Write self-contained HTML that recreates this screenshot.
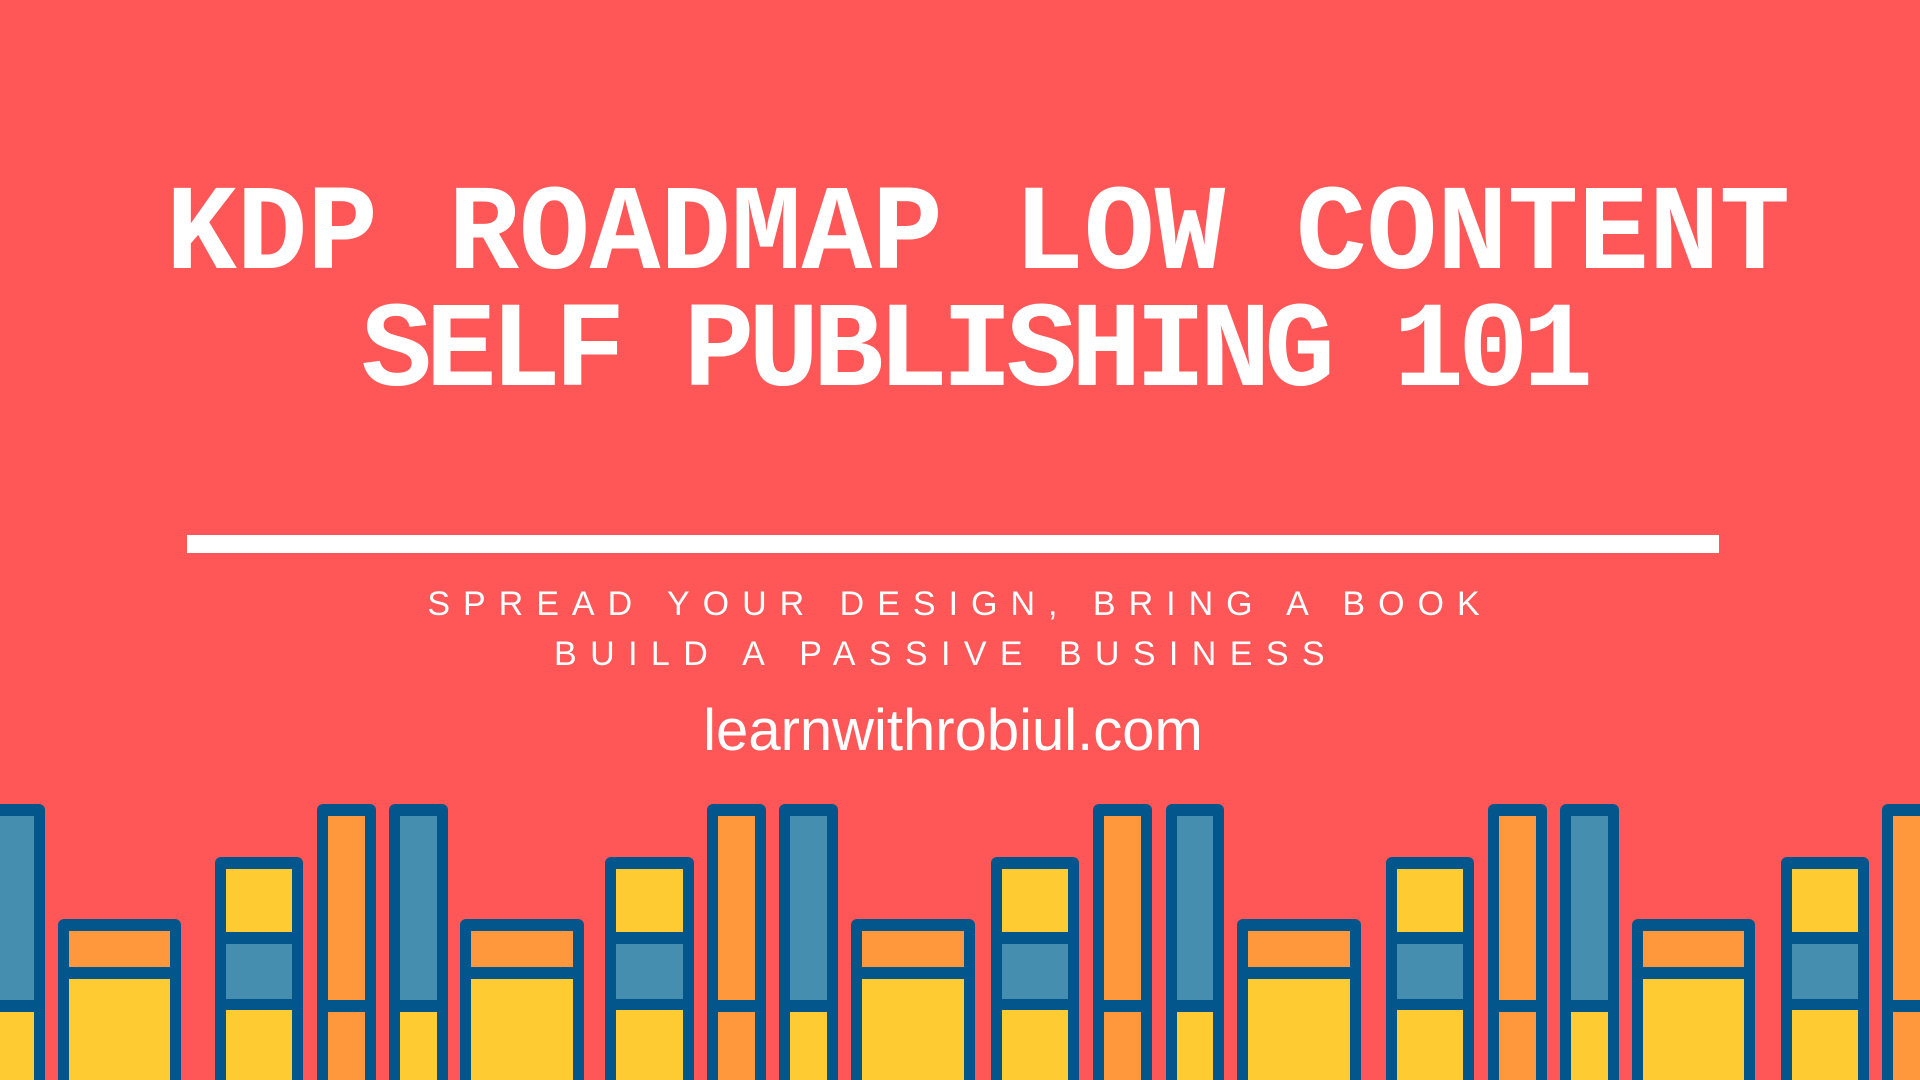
<!DOCTYPE html>
<html><head><meta charset="utf-8"><style>
html,body{margin:0;padding:0;overflow:hidden;width:1920px;height:1080px}
body{background:#ff5757;position:relative;font-family:"Liberation Sans",sans-serif}
.t{position:absolute;left:0;width:1956px;text-align:center;color:#fff;font-family:"Liberation Mono",monospace;font-weight:bold;font-size:118px;letter-spacing:-0.2px;line-height:1;white-space:nowrap;transform-origin:50% 50%;transform:scaleY(1.03)}
.bar{position:absolute;left:187px;top:535px;width:1532px;height:18px;background:#fff}
.s{position:absolute;left:0;width:1920px;text-align:center;color:#fff;font-size:34px;letter-spacing:13px;white-space:nowrap;line-height:1}
.u{position:absolute;left:0;width:1906px;text-align:center;color:#fff;font-size:58px;white-space:nowrap;line-height:1}
.b{position:absolute;background:#02568c;border-radius:6px 6px 0 0;bottom:0;overflow:hidden}
.b i{position:absolute;left:11px;right:11px;display:block}
.tall{top:804px}.med{top:857px}.sh{top:919px}
.Y{background:#ffcb32}.O{background:#ff973d}.B{background:#468eb0}
</style></head><body>
<div class="t" style="top:178px">KDP ROADMAP LOW CONTENT</div>
<div class="t" style="top:295px;width:1948px;letter-spacing:-6.3px">SELF PUBLISHING 101</div>
<div class="bar"></div>
<div class="s" style="top:587px;left:0">SPREAD YOUR DESIGN, BRING A BOOK</div>
<div class="s" style="top:637px;left:-14px;letter-spacing:13.4px">BUILD A PASSIVE BUSINESS</div>
<div class="u" style="top:702px">learnwithrobiul.com</div>

<div class="b tall" style="left:-15px;width:60px"><i class="B" style="top:12px;height:184px"></i><i class="Y" style="top:208px;bottom:0"></i></div>
<div class="b sh" style="left:58px;width:123px"><i class="O" style="top:12px;height:36px"></i><i class="Y" style="top:60px;bottom:0"></i></div>
<div class="b med" style="left:215px;width:88px"><i class="Y" style="top:12px;height:63px"></i><i class="B" style="top:87px;height:55px"></i><i class="Y" style="top:153px;bottom:0"></i></div>
<div class="b tall" style="left:317px;width:59px"><i class="O" style="top:12px;height:184px"></i><i class="O" style="top:208px;bottom:0"></i></div>
<div class="b tall" style="left:389px;width:59px"><i class="B" style="top:12px;height:184px"></i><i class="Y" style="top:208px;bottom:0"></i></div>

<div class="b sh" style="left:460px;width:124px"><i class="O" style="top:12px;height:36px"></i><i class="Y" style="top:60px;bottom:0"></i></div>
<div class="b med" style="left:605px;width:89px"><i class="Y" style="top:12px;height:63px"></i><i class="B" style="top:87px;height:55px"></i><i class="Y" style="top:153px;bottom:0"></i></div>
<div class="b tall" style="left:707px;width:59px"><i class="O" style="top:12px;height:184px"></i><i class="O" style="top:208px;bottom:0"></i></div>
<div class="b tall" style="left:779px;width:59px"><i class="B" style="top:12px;height:184px"></i><i class="Y" style="top:208px;bottom:0"></i></div>

<div class="b sh" style="left:851px;width:124px"><i class="O" style="top:12px;height:36px"></i><i class="Y" style="top:60px;bottom:0"></i></div>
<div class="b med" style="left:991px;width:88px"><i class="Y" style="top:12px;height:63px"></i><i class="B" style="top:87px;height:55px"></i><i class="Y" style="top:153px;bottom:0"></i></div>
<div class="b tall" style="left:1093px;width:59px"><i class="O" style="top:12px;height:184px"></i><i class="O" style="top:208px;bottom:0"></i></div>
<div class="b tall" style="left:1166px;width:58px"><i class="B" style="top:12px;height:184px"></i><i class="Y" style="top:208px;bottom:0"></i></div>

<div class="b sh" style="left:1237px;width:124px"><i class="O" style="top:12px;height:36px"></i><i class="Y" style="top:60px;bottom:0"></i></div>
<div class="b med" style="left:1386px;width:88px"><i class="Y" style="top:12px;height:63px"></i><i class="B" style="top:87px;height:55px"></i><i class="Y" style="top:153px;bottom:0"></i></div>
<div class="b tall" style="left:1488px;width:59px"><i class="O" style="top:12px;height:184px"></i><i class="O" style="top:208px;bottom:0"></i></div>
<div class="b tall" style="left:1560px;width:59px"><i class="B" style="top:12px;height:184px"></i><i class="Y" style="top:208px;bottom:0"></i></div>

<div class="b sh" style="left:1632px;width:123px"><i class="O" style="top:12px;height:36px"></i><i class="Y" style="top:60px;bottom:0"></i></div>
<div class="b med" style="left:1781px;width:88px"><i class="Y" style="top:12px;height:63px"></i><i class="B" style="top:87px;height:55px"></i><i class="Y" style="top:153px;bottom:0"></i></div>
<div class="b tall" style="left:1882px;width:59px"><i class="O" style="top:12px;height:184px"></i><i class="O" style="top:208px;bottom:0"></i></div>
</body></html>
